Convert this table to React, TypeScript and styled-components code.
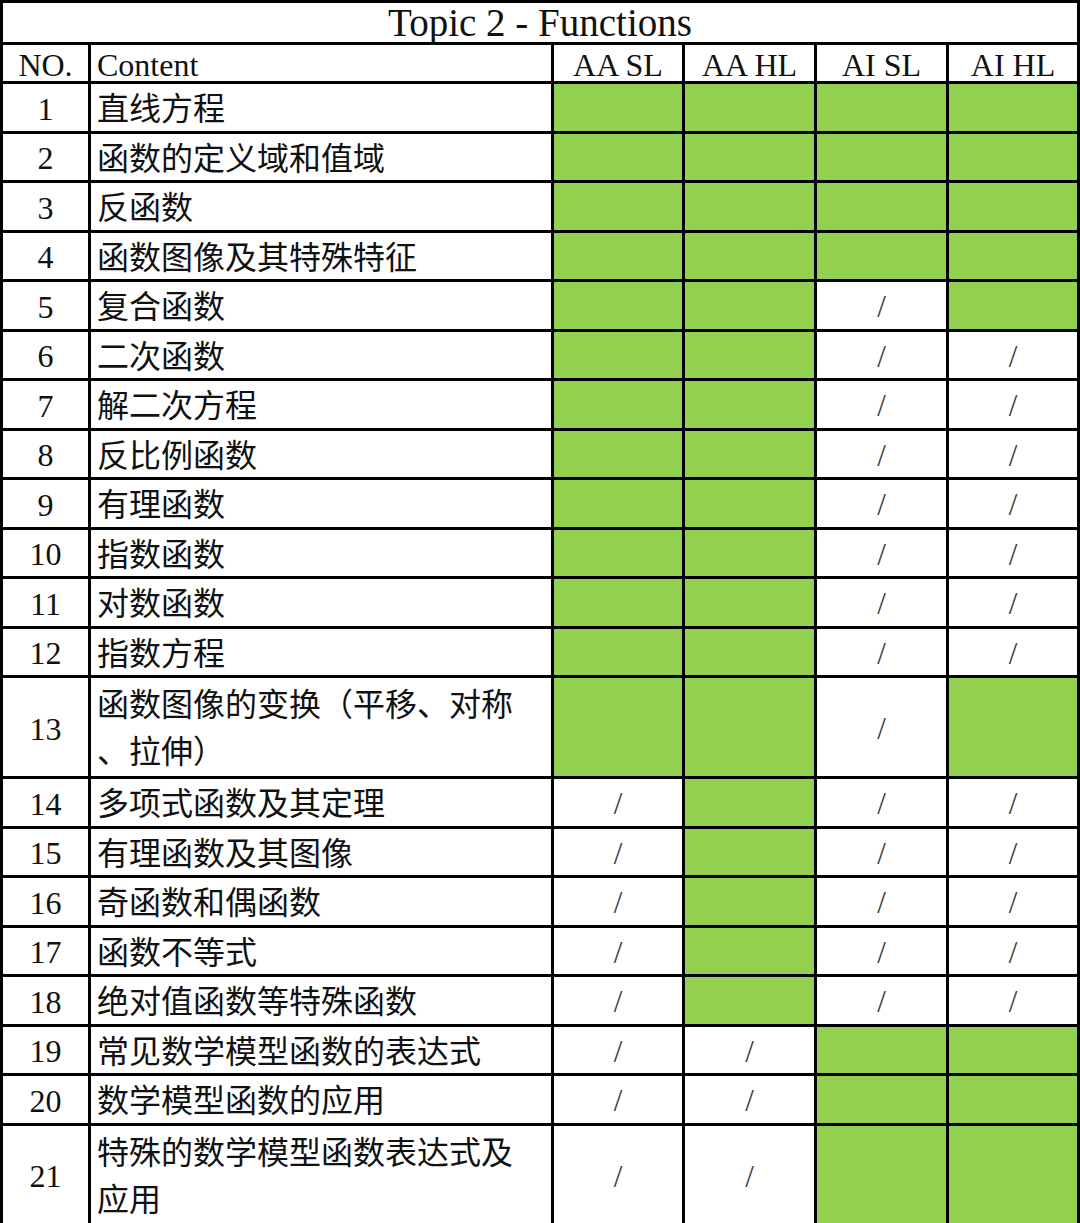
import React from 'react';
import styled, { createGlobalStyle } from 'styled-components';

const GREEN = '#92d050';
const LINE = '#000';

type Mark = 'G' | '/';

interface TopicRow {
  no: number;
  content: string[];
  marks: Mark[];
  tall?: boolean;
}

const rows: TopicRow[] = [
  { no: 1, content: ['直线方程'], marks: ['G', 'G', 'G', 'G'] },
  { no: 2, content: ['函数的定义域和值域'], marks: ['G', 'G', 'G', 'G'] },
  { no: 3, content: ['反函数'], marks: ['G', 'G', 'G', 'G'] },
  { no: 4, content: ['函数图像及其特殊特征'], marks: ['G', 'G', 'G', 'G'] },
  { no: 5, content: ['复合函数'], marks: ['G', 'G', '/', 'G'] },
  { no: 6, content: ['二次函数'], marks: ['G', 'G', '/', '/'] },
  { no: 7, content: ['解二次方程'], marks: ['G', 'G', '/', '/'] },
  { no: 8, content: ['反比例函数'], marks: ['G', 'G', '/', '/'] },
  { no: 9, content: ['有理函数'], marks: ['G', 'G', '/', '/'] },
  { no: 10, content: ['指数函数'], marks: ['G', 'G', '/', '/'] },
  { no: 11, content: ['对数函数'], marks: ['G', 'G', '/', '/'] },
  { no: 12, content: ['指数方程'], marks: ['G', 'G', '/', '/'] },
  {
    no: 13,
    content: ['函数图像的变换（平移、对称', '、拉伸）'],
    marks: ['G', 'G', '/', 'G'],
    tall: true,
  },
  { no: 14, content: ['多项式函数及其定理'], marks: ['/', 'G', '/', '/'] },
  { no: 15, content: ['有理函数及其图像'], marks: ['/', 'G', '/', '/'] },
  { no: 16, content: ['奇函数和偶函数'], marks: ['/', 'G', '/', '/'] },
  { no: 17, content: ['函数不等式'], marks: ['/', 'G', '/', '/'] },
  { no: 18, content: ['绝对值函数等特殊函数'], marks: ['/', 'G', '/', '/'] },
  { no: 19, content: ['常见数学模型函数的表达式'], marks: ['/', '/', 'G', 'G'] },
  { no: 20, content: ['数学模型函数的应用'], marks: ['/', '/', 'G', 'G'] },
  {
    no: 21,
    content: ['特殊的数学模型函数表达式及', '应用'],
    marks: ['/', '/', 'G', 'G'],
    tall: true,
  },
];

const levels = ['AA SL', 'AA HL', 'AI SL', 'AI HL'];
const levelWidths = [131, 132, 132, 131];

const GlobalStyle = createGlobalStyle`
  html, body {
    margin: 0;
    padding: 0;
    background: #fff;
  }
  * {
    box-sizing: border-box;
  }
`;

const Table = styled.table`
  width: 1080px;
  table-layout: fixed;
  border-collapse: separate;
  border-spacing: 0;
  border-left: 3px solid ${LINE};
  border-top: 3px solid ${LINE};
  font-family: 'Liberation Serif', 'Noto Sans CJK SC', serif;
  color: #111;
`;

const Cell = styled.td`
  border-right: 3px solid ${LINE};
  border-bottom: 3px solid ${LINE};
  padding: 0;
  font-size: 32px;
  font-weight: normal;
  line-height: 1;
  vertical-align: middle;
  white-space: nowrap;
  overflow: hidden;
`;

const TitleRow = styled.tr`
  height: 42px;
`;

const Title = styled(Cell)`
  font-size: 39px;
  line-height: 38px;
  text-align: center;
  overflow: visible;
`;

const HeaderRow = styled.tr`
  height: 39px;
`;

const HeadCell = styled(Cell)<{ $left?: boolean }>`
  text-align: ${(p) => (p.$left ? 'left' : 'center')};
  padding-left: ${(p) => (p.$left ? '6px' : '0')};
  padding-top: 3px;
`;

const BodyRow = styled.tr<{ $tall?: boolean }>`
  height: ${(p) => (p.$tall ? '98px' : '49.5px')};
`;

const NoCell = styled(Cell)`
  text-align: center;
  padding-top: 3px;
`;

const ContentCell = styled(Cell)<{ $tall?: boolean }>`
  padding-left: 6px;
  padding-top: 4px;
  line-height: ${(p) => (p.$tall ? '47px' : '38px')};
`;

const MarkCell = styled(Cell)<{ $on: boolean }>`
  background: ${(p) => (p.$on ? GREEN : '#fff')};
  text-align: center;
  color: #3a3a3a;
  font-size: 31px;
  padding-top: 3px;
`;

const App = () => {
  return (
    <>
      <GlobalStyle />
      <Table>
        <colgroup>
          <col style={{ width: 88 }} />
          <col style={{ width: 463 }} />
          {levelWidths.map((w, i) => (
            <col key={i} style={{ width: w }} />
          ))}
        </colgroup>
        <thead>
          <TitleRow>
            <Title as="th" colSpan={6}>
              Topic 2 - Functions
            </Title>
          </TitleRow>
          <HeaderRow>
            <HeadCell as="th">NO.</HeadCell>
            <HeadCell as="th" $left>
              Content
            </HeadCell>
            {levels.map((l) => (
              <HeadCell as="th" key={l}>
                {l}
              </HeadCell>
            ))}
          </HeaderRow>
        </thead>
        <tbody>
          {rows.map((r) => (
            <BodyRow key={r.no} $tall={r.tall}>
              <NoCell>{r.no}</NoCell>
              <ContentCell $tall={r.tall}>
                {r.content.map((line, i) => (
                  <React.Fragment key={i}>
                    {i > 0 && <br />}
                    {line}
                  </React.Fragment>
                ))}
              </ContentCell>
              {r.marks.map((m, i) => (
                <MarkCell key={i} $on={m === 'G'}>
                  {m === '/' ? '/' : ''}
                </MarkCell>
              ))}
            </BodyRow>
          ))}
        </tbody>
      </Table>
    </>
  );
};

export default App;
